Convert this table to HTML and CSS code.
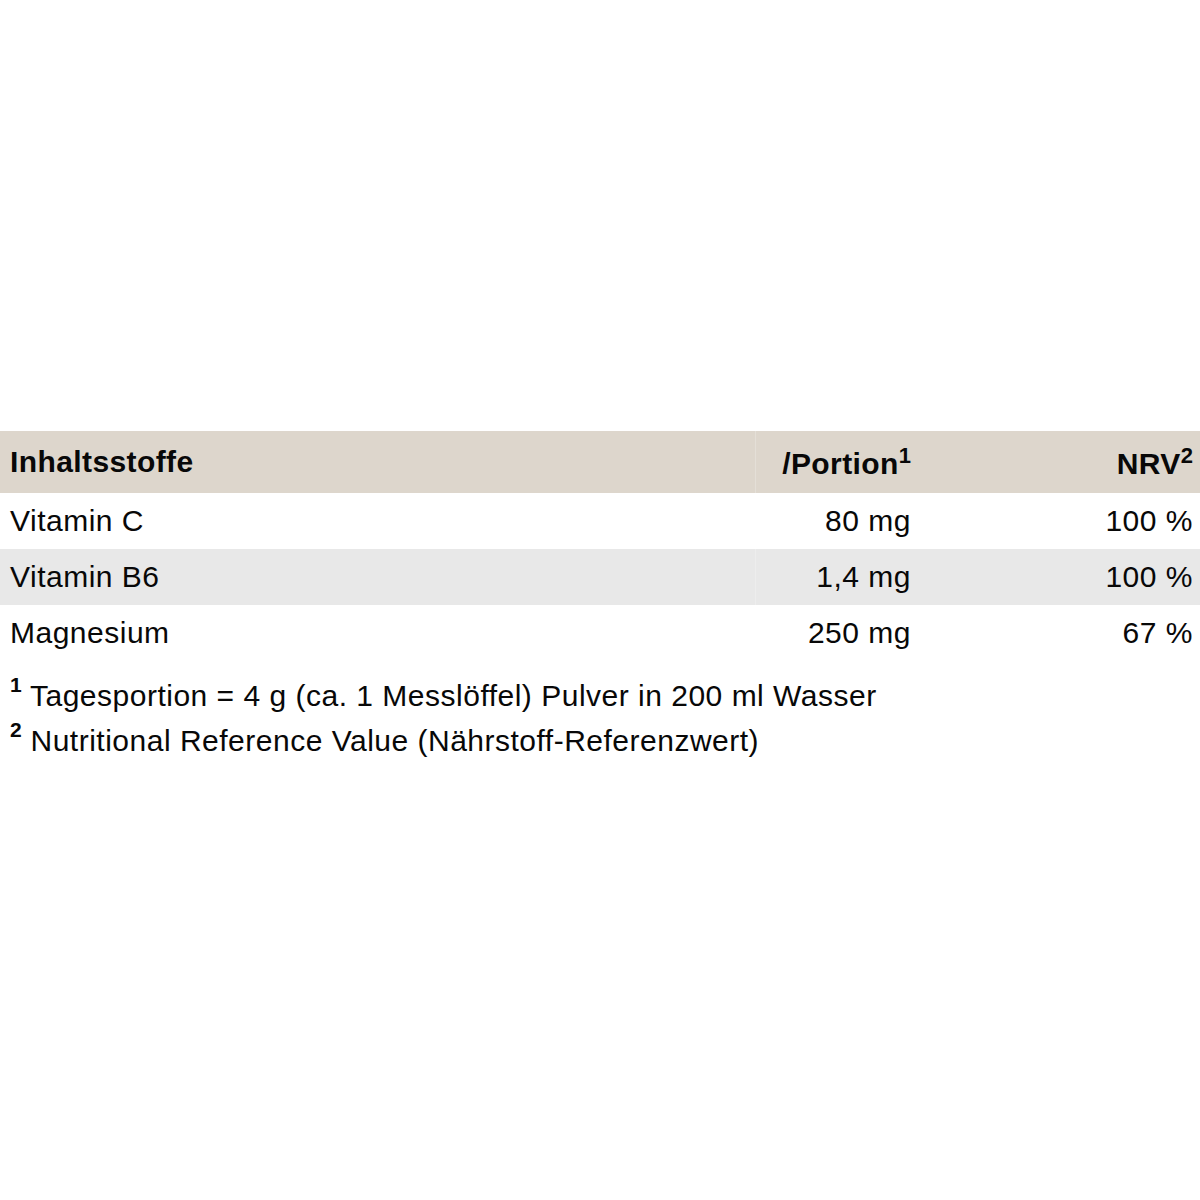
FILE: index.html
```html
<!DOCTYPE html>
<html lang="de">
<head>
<meta charset="utf-8">
<link rel="stylesheet" href="styles.css">
</head>
<body>
<div class="page">
  <table class="nutri">
    <thead>
      <tr class="head">
        <th class="c1">Inhaltsstoffe</th>
        <th class="c2">/Portion<sup>1</sup></th>
        <th class="c3">NRV<sup>2</sup></th>
      </tr>
    </thead>
    <tbody>
      <tr><td class="c1">Vitamin C</td><td class="c2">80 mg</td><td class="c3">100 %</td></tr>
      <tr class="alt"><td class="c1">Vitamin B6</td><td class="c2">1,4 mg</td><td class="c3">100 %</td></tr>
      <tr><td class="c1">Magnesium</td><td class="c2">250 mg</td><td class="c3">67 %</td></tr>
    </tbody>
  </table>
  <div class="notes">
    <p><sup>1</sup> Tagesportion = 4 g (ca. 1 Messlöffel) Pulver in 200 ml Wasser</p>
    <p><sup>2</sup> Nutritional Reference Value (Nährstoff-Referenzwert)</p>
  </div>
</div>
</body>
</html>
```

FILE: styles.css
```css
html, body {
  margin: 0;
  padding: 0;
  background: #fff;
}
body {
  font-family: "Liberation Sans", Arial, sans-serif;
  color: #080808;
}
.page {
  padding-top: 431px;
}
.nutri {
  width: 1200px;
  border-collapse: collapse;
  font-size: 30px;
  letter-spacing: 0.5px;
}
.nutri th, .nutri td {
  padding: 0 10px;
  vertical-align: middle;
  font-weight: normal;
}
.nutri th {
  font-weight: bold;
  letter-spacing: 0.4px;
}
.head {
  background: #ddd6cc;
  height: 62px;
}
tbody tr { height: 56px; }
tbody tr.alt { background: #e8e8e8; }
.head .c2, .alt .c2 {
  border-left: 1px solid rgba(255, 255, 255, 0.22);
}
.c1 { width: 735px; text-align: left; }
.c2 { width: 145px; text-align: right; }
.c3 { text-align: right; padding-right: 7px !important; }
.head .c2, .head .c3 { padding-top: 4px; }
.nutri sup {
  font-size: 22px;
  line-height: 0;
  vertical-align: 11px;
  letter-spacing: 0;
}
.notes {
  padding: 12px 10px 0;
  font-size: 30px;
  letter-spacing: 0.5px;
}
.notes p {
  margin: 0;
  line-height: 45px;
}
.notes sup {
  font-weight: bold;
  font-size: 21px;
  line-height: 0;
  vertical-align: 14px;
  letter-spacing: 0;
}
```
